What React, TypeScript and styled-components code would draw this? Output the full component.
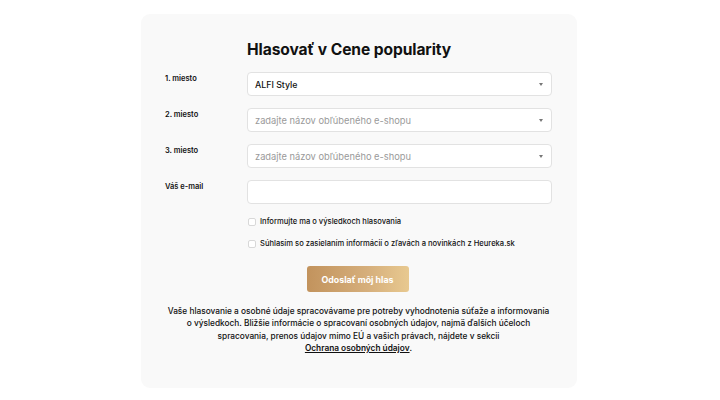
import styled, { createGlobalStyle } from "styled-components";

const GlobalStyle = createGlobalStyle`
  body {
    margin: 0;
    background: #ffffff;
    font-family: Inter, "Noto Sans", sans-serif;
    color: #111;
  }
`;

const places = [
  { label: "1. miesto", value: "ALFI Style" },
  { label: "2. miesto", value: "" },
  { label: "3. miesto", value: "" },
];

const consents = [
  "Informujte ma o výsledkoch hlasovania",
  "Súhlasím so zasielaním informácií o zľavách a novinkách z Heureka.sk",
];

const App = () => {
  return (
    <>
      <GlobalStyle />
      <Page>
        <Card>
          <Form>
            <Title>Hlasovať v Cene popularity</Title>
            {places.map((p) => (
              <Row key={p.label}>
                <Label>{p.label}</Label>
                <Select $empty={!p.value}>
                  <span>{p.value || "zadajte názov obľúbeného e-shopu"}</span>
                  <Caret />
                </Select>
              </Row>
            ))}
            <Row>
              <Label>Váš e-mail</Label>
              <Input />
            </Row>
            <Checks>
              {consents.map((c) => (
                <CheckRow key={c}>
                  <Box />
                  <span>{c}</span>
                </CheckRow>
              ))}
            </Checks>
          </Form>
          <SubmitBtn>Odoslať môj hlas</SubmitBtn>
          <Notice>
            Vaše hlasovanie a osobné údaje spracovávame pre potreby vyhodnotenia súťaže a informovania
            <br />
            o výsledkoch. Bližšie informácie o spracovaní osobných údajov, najmä ďalších účeloch
            <br />
            spracovania, prenos údajov mimo EÚ a vašich právach, nájdete v sekcii
            <br />
            <a href="#">Ochrana osobných údajov</a>.
          </Notice>
        </Card>
      </Page>
    </>
  );
};

export default App;

const Page = styled.div`
  width: 720px;
  height: 400px;
  display: flex;
  justify-content: center;
  padding-top: 14px;
  box-sizing: border-box;
`;

const Card = styled.div`
  width: 436px;
  height: 374px;
  margin-left: -2px;
  box-sizing: border-box;
  background: #f9f9f9;
  border-radius: 9px;
  padding: 26px 25px 0 24px;
  display: flex;
  flex-direction: column;
  align-items: center;
`;

const Form = styled.div`
  width: 100%;
  display: grid;
  grid-template-columns: 82px 1fr;
  row-gap: 12px;
`;

const Title = styled.h1`
  grid-column: 2;
  margin: 0;
  font-size: 15.6px;
  font-weight: 700;
  line-height: 20px;
  letter-spacing: -0.1px;
  color: #111;
`;

const Row = styled.div`
  display: contents;
`;

const Label = styled.div`
  font-size: 7.5px;
  font-weight: 600;
  padding-top: 2px;
  color: #111;
`;

const Field = styled.div`
  height: 24px;
  box-sizing: border-box;
  background: #fff;
  border: 1px solid #e2e2e2;
  border-radius: 4px;
`;

const Select = styled(Field)<{ $empty: boolean }>`
  display: flex;
  align-items: center;
  justify-content: space-between;
  padding: 0 8px 0 7px;
  font-size: ${(p) => (p.$empty ? "9.3px" : "8.8px")};
  font-weight: ${(p) => (p.$empty ? 400 : 500)};
  color: ${(p) => (p.$empty ? "#9a9a9a" : "#111")};
`;

const Caret = styled.span`
  width: 0;
  height: 0;
  border-left: 2.5px solid transparent;
  border-right: 2.5px solid transparent;
  border-top: 3px solid #777;
`;

const Input = styled(Field)``;

const Checks = styled.div`
  grid-column: 2;
  display: flex;
  flex-direction: column;
  gap: 13px;
  padding-top: 1px;
`;

const CheckRow = styled.label`
  display: flex;
  align-items: center;
  gap: 4px;
  font-size: 7.6px;
  font-weight: 500;
  color: #111;
`;

const Box = styled.span`
  width: 8px;
  height: 8px;
  box-sizing: border-box;
  background: #fff;
  border: 1px solid #d8d8d8;
  border-radius: 2px;
  margin-left: 1px;
`;

const SubmitBtn = styled.button`
  margin-top: 18px;
  width: 102px;
  height: 26px;
  border: none;
  border-radius: 3px;
  background: linear-gradient(90deg, #c2935d 0%, #d6af7c 60%, #e8c990 100%);
  color: #fff;
  font-family: Inter, "Noto Sans", sans-serif;
  font-size: 8.8px;
  font-weight: 700;
  margin-left: -2px;
`;

const Notice = styled.p`
  margin: 13px 0 0;
  text-align: center;
  font-size: 8.3px;
  font-weight: 500;
  line-height: 12.3px;
  color: #111;

  a {
    color: #111;
    font-weight: 600;
    text-decoration: underline;
  }
`;
